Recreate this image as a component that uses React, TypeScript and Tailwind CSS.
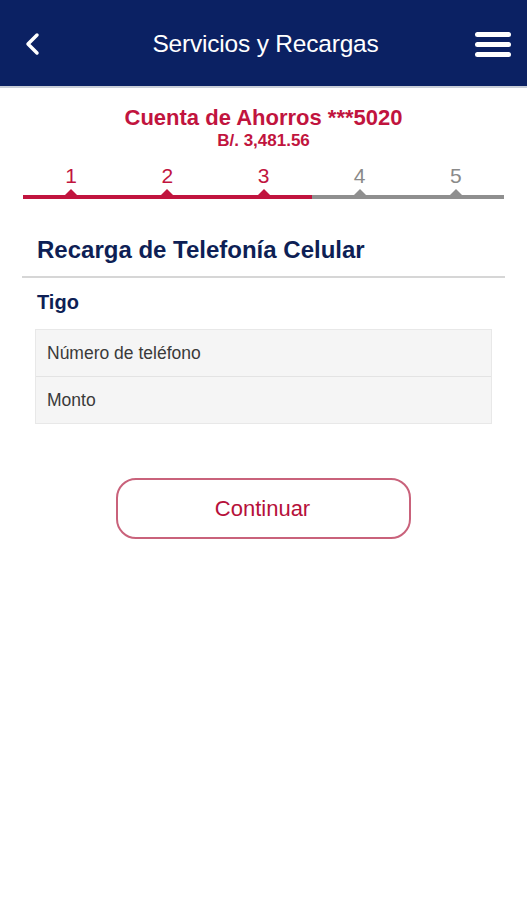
export default function App() {
  const steps = [1, 2, 3, 4, 5];
  const current = 3;

  return (
    <div className="min-h-screen bg-white" style={{ fontFamily: '"Liberation Sans", Arial, sans-serif' }}>
      {/* Header */}
      <div className="h-[88px] bg-[#0b2163] border-b-2 border-[#c9ced8] flex items-center justify-between px-6 pt-[2px]">
        <button className="w-8 h-8 flex items-center">
          <svg width="16" height="24" viewBox="0 0 16 24" fill="none">
            <path d="M13 3 L4 12 L13 21" stroke="white" strokeWidth="3.5" strokeLinecap="round" strokeLinejoin="round" />
          </svg>
        </button>
        <h1 className="text-white text-[24.5px] tracking-[-0.2px]">Servicios y Recargas</h1>
        <button className="w-9 flex flex-col gap-[5px] -mr-[8px]">
          <span className="block h-[5px] w-9 bg-white rounded-full" />
          <span className="block h-[5px] w-9 bg-white rounded-full" />
          <span className="block h-[5px] w-9 bg-white rounded-full" />
        </button>
      </div>

      {/* Account */}
      <div className="text-center text-[#c1143e] font-bold mt-[17px]">
        <div className="text-[22px] leading-[26px]">Cuenta de Ahorros ***5020</div>
        <div className="text-[17px] leading-5">B/. 3,481.56</div>
      </div>

      {/* Stepper */}
      <div className="mx-[23px] mt-[13px] flex">
        {steps.map((s) => {
          const active = s <= current;
          return (
            <div key={s} className="flex-1 flex flex-col items-center">
              <span className={`text-[21px] leading-6 ${active ? 'text-[#c1143e]' : 'text-[#8a8a8a]'}`}>{s}</span>
              <svg width="14" height="6" viewBox="0 0 14 6" className="mt-[1px]">
                <path d="M1 6 L7 0 L13 6 Z" fill={active ? '#c1143e' : '#8f8f8f'} />
              </svg>
              <div className={`w-full h-[4px] ${active ? 'bg-[#c1143e]' : 'bg-[#8f8f8f]'}`} />
            </div>
          );
        })}
      </div>

      {/* Section */}
      <div className="mx-[22px] mt-[37px] border-b-2 border-[#d6d6d6] pb-[12px] px-[15px]">
        <h2 className="text-[#0e1f55] font-bold text-[24px] leading-7">Recarga de Telefonía Celular</h2>
      </div>

      <div className="px-[35px]">
        <div className="text-[#0e1f55] font-bold text-[20px] leading-6 mt-[12px] ml-[2px]">Tigo</div>
        <div className="mt-[15px] w-[457px] border border-[#e8e8e8] bg-[#f5f5f5]">
          <div className="h-[47px] flex items-center px-[11px] text-[17.5px] text-[#3a3a3a] border-b border-[#e3e3e3]">
            Número de teléfono
          </div>
          <div className="h-[46px] flex items-center px-[11px] text-[17.5px] text-[#3a3a3a]">Monto</div>
        </div>
      </div>

      <div className="flex justify-center mt-[54px]">
        <button className="w-[295px] h-[61px] rounded-[20px] border-2 border-[#c9627b] text-[#b6103a] text-[22px] pr-[2px]">
          Continuar
        </button>
      </div>
    </div>
  );
}
